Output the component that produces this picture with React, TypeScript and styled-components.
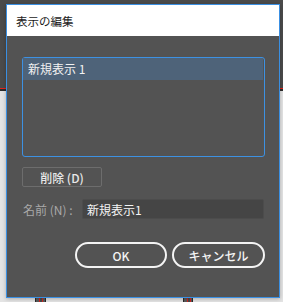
import React from "react";
import styled, { createGlobalStyle } from "styled-components";

const GlobalStyle = createGlobalStyle`
  html, body {
    margin: 0;
    padding: 0;
  }
  body {
    width: 283px;
    height: 302px;
    overflow: hidden;
    font-family: "Noto Sans CJK JP", "Noto Sans", sans-serif;
  }
`;

const Page = styled.div`
  position: relative;
  width: 283px;
  height: 302px;
  display: flex;
  flex-direction: column;
`;

const TopArea = styled.div`
  height: 88px;
  background: #4b4b4b;
`;

const RedLine = styled.div`
  height: 1px;
  background: #e3241f;
`;

const DarkLine = styled.div`
  height: 2px;
  background: #2c2c2c;
`;

const LightArea = styled.div`
  flex: 1;
  background: #e4e4e4;
  display: flex;
  align-items: flex-end;
  padding-left: 35px;
  gap: 137px;
`;

const Stub = styled.div<{ $w: number }>`
  width: ${(p) => p.$w}px;
  height: 6px;
  box-sizing: border-box;
  border-left: 1px solid #2a2a2a;
  border-right: 1px solid #2a2a2a;
  background: linear-gradient(
    to right,
    #5a5a5a 0 3px,
    #d2231e 3px 4px,
    #4a4a4a 4px 6px,
    #d2231e 6px 7px,
    #5a5a5a 7px
  );
`;

const Dialog = styled.div`
  position: absolute;
  left: 6px;
  top: 4px;
  width: 274px;
  height: 294px;
  box-sizing: border-box;
  border: 1px solid #3a8fe2;
  background: #535353;
  display: flex;
  flex-direction: column;
  box-shadow: 0 1px 4px rgba(0, 0, 0, 0.25);
`;

const TitleBar = styled.div`
  height: 31px;
  background: #ffffff;
  display: flex;
  align-items: center;
  padding-left: 9px;
  color: #1b1b1b;
  font-size: 11.5px;
`;

const Body = styled.div`
  padding: 21px 14px 0 15px;
  display: flex;
  flex-direction: column;
`;

const ListBox = styled.div`
  height: 100px;
  box-sizing: border-box;
  border: 1px solid #3d91e2;
  border-radius: 3px;
  padding: 0 1px 0 0;
`;

const ListItem = styled.div<{ $selected?: boolean }>`
  height: 22px;
  line-height: 22px;
  padding-left: 5px;
  font-size: 12px;
  color: #f2f2f2;
  background: ${(p) => (p.$selected ? "#4e6379" : "transparent")};
`;

const DeleteButton = styled.button`
  margin-top: 10px;
  width: 80px;
  height: 20px;
  box-sizing: border-box;
  border: 1px solid #6d6d6d;
  border-radius: 2px;
  background: transparent;
  color: #e8e8e8;
  font-family: inherit;
  font-size: 12px;
  font-weight: 500;
  padding: 0;
  display: flex;
  align-items: center;
  justify-content: center;
`;

const NameRow = styled.div`
  margin-top: 12px;
  display: flex;
  align-items: center;
`;

const Label = styled.label`
  width: 60px;
  padding-left: 1px;
  box-sizing: border-box;
  font-size: 12px;
  color: #a9a9a9;
  white-space: nowrap;
`;

const TextInput = styled.div`
  width: 182px;
  height: 20px;
  box-sizing: border-box;
  border: 1px solid #4c4c4c;
  border-radius: 2px;
  background: #454545;
  color: #f4f4f4;
  font-size: 12px;
  padding-left: 4px;
  display: flex;
  align-items: center;
`;

const ButtonRow = styled.div`
  margin-top: 23px;
  display: flex;
  justify-content: flex-end;
  gap: 5px;
`;

const PillButton = styled.button<{ $w: number }>`
  width: ${(p) => p.$w}px;
  height: 26px;
  box-sizing: border-box;
  border: 2px solid #f4f4f4;
  border-radius: 13px;
  background: transparent;
  color: #f4f4f4;
  font-family: inherit;
  font-size: 12px;
  font-weight: 500;
  padding: 0;
  display: flex;
  align-items: center;
  justify-content: center;
`;

export default function App() {
  return (
    <>
      <GlobalStyle />
      <Page>
        <TopArea />
        <RedLine />
        <DarkLine />
        <LightArea>
          <Stub $w={11} />
          <Stub $w={10} />
        </LightArea>
        <Dialog>
          <TitleBar>表示の編集</TitleBar>
          <Body>
            <ListBox>
              <ListItem $selected>新規表示 1</ListItem>
            </ListBox>
            <DeleteButton>削除 (D)</DeleteButton>
            <NameRow>
              <Label>名前 (N) :</Label>
              <TextInput>新規表示1</TextInput>
            </NameRow>
            <ButtonRow>
              <PillButton $w={92}>OK</PillButton>
              <PillButton $w={93}>キャンセル</PillButton>
            </ButtonRow>
          </Body>
        </Dialog>
      </Page>
    </>
  );
}
